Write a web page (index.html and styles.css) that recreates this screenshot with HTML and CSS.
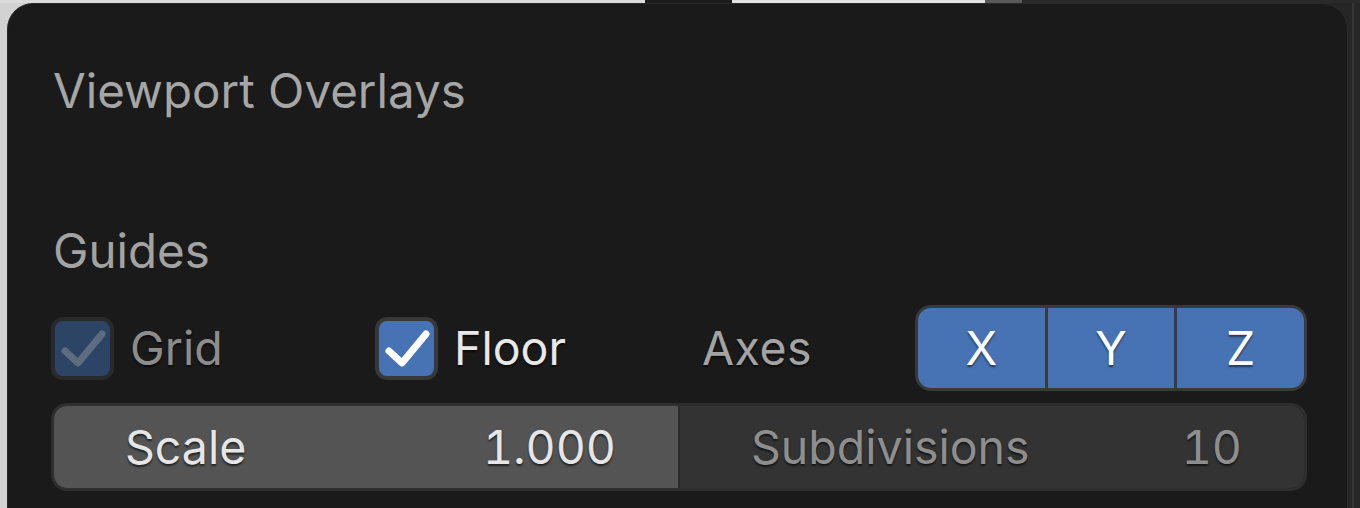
FILE: index.html
```html
<!DOCTYPE html>
<html lang="en">
<head>
  <meta charset="UTF-8" />
  <title>Viewport Overlays</title>
  <link rel="stylesheet" href="styles.css">
</head>
<body>
  <div class="scene">
    <div class="panel">
      <h1 class="panel-title">Viewport Overlays</h1>

      <h2 class="section-title">Guides</h2>

      <div class="row guides-row">
        <label class="check dim">
          <span class="box">
            <svg viewBox="0 0 63 63"><path d="M14 34 L27 46 L51 17" /></svg>
          </span>
          <span class="check-label">Grid</span>
        </label>

        <label class="check">
          <span class="box">
            <svg viewBox="0 0 63 63"><path d="M14 34 L27 46 L51 17" /></svg>
          </span>
          <span class="check-label">Floor</span>
        </label>

        <div class="axes">
          <span class="axes-label">Axes</span>
          <div class="toggle-group">
            <button class="toggle">X</button>
            <button class="toggle">Y</button>
            <button class="toggle">Z</button>
          </div>
        </div>
      </div>

      <div class="row fields">
        <div class="field field-scale">
          <span>Scale</span>
          <span class="num">1.000</span>
        </div>
        <div class="field field-subdiv">
          <span>Subdivisions</span>
          <span class="num">10</span>
        </div>
      </div>
    </div>
    <div class="edge"></div>
  </div>
</body>
</html>
```

FILE: styles.css
```css
body {
  margin: 0;
  background: #262626;
  font-family: Inter, 'Noto Sans', sans-serif;
  overflow: hidden;
}

.scene {
  display: flex;
  height: 508px;
  padding-top: 3px;
  box-sizing: border-box;
  background:
    linear-gradient(to right, #dcdcdc 0 645px, #1c1c1c 645px 732px, #e2e2e2 732px 985px, #595959 985px 1022px, #2a2a2a 1022px) top / 100% 3px no-repeat,
    linear-gradient(to right, #d2d2d2 0 60px, #262626 60px);
}

.panel {
  margin-left: 7px;
  width: 1341px;
  height: 560px;
  flex-shrink: 0;
  background: #1a1a1a;
  border: 1px solid #2a2a2a;
  border-radius: 26px;
  box-sizing: border-box;
  padding: 0 40px 0 43px;
}

.edge {
  margin-left: 4px;
  width: 2px;
  background: #363636;
}

.panel-title {
  margin: 57px 0 0 2px;
  font-size: 47.5px;
  font-weight: 400;
  color: #a6a6a6;
  line-height: 60px;
}

.section-title {
  margin: 100px 0 0 2px;
  font-size: 47.5px;
  font-weight: 400;
  color: #a3a3a3;
  line-height: 60px;
}

.row {
  display: flex;
  align-items: center;
}

.guides-row {
  margin-top: 24px;
  height: 86px;
  display: grid;
  grid-template-columns: 324px 327px 1fr;
  align-items: center;
}

.check {
  display: flex;
  align-items: center;
  gap: 16px;
}

.box {
  width: 63px;
  height: 63px;
  box-sizing: border-box;
  border: 4px solid #383838;
  border-radius: 12px;
  background: #4772b3;
  display: flex;
}

.box svg {
  margin: -4px;
  width: 63px;
  height: 63px;
}

.box path {
  fill: none;
  stroke: #ffffff;
  stroke-width: 7;
  stroke-linecap: round;
  stroke-linejoin: round;
}

.check-label {
  font-size: 46.5px;
  color: #e8e8e8;
  text-shadow: 0 2px 2px rgba(0, 0, 0, 0.6);
}

.check.dim .box {
  background: #2c4466;
  border-color: #2a2a2a;
}

.check.dim .box path {
  stroke: #5e6c80;
}

.check.dim .check-label {
  color: #8c8c8c;
}

.axes {
  display: flex;
  align-items: center;
  justify-content: space-between;
}

.axes-label {
  font-size: 46.5px;
  letter-spacing: 0.5px;
  color: #a3a3a3;
  text-shadow: 0 2px 2px rgba(0, 0, 0, 0.6);
}

.toggle-group {
  display: flex;
  width: 392px;
  height: 86px;
  box-sizing: border-box;
  border: 3px solid #3a3a3a;
  border-radius: 16px;
  overflow: hidden;
  background: #3a3a3a;
  gap: 3px;
}

.toggle {
  flex: 1;
  border: none;
  background: #4772b3;
  color: #ffffff;
  font-family: Inter, 'Noto Sans', sans-serif;
  font-size: 46.5px;
  padding: 0;
  text-shadow: 0 2px 2px rgba(0, 0, 0, 0.5);
}

.fields {
  margin-top: 12px;
  height: 88px;
  border: 3px solid #2e2e2e;
  border-radius: 16px;
  overflow: hidden;
  box-sizing: border-box;
}

.field {
  flex: 1;
  height: 100%;
  display: flex;
  align-items: center;
  justify-content: space-between;
  padding: 0 62px 0 71px;
  font-size: 46.5px;
  text-shadow: 0 2px 2px rgba(0, 0, 0, 0.6);
}

.num {
  font-variant-numeric: tabular-nums;
}

.field-scale {
  background: #545454;
  color: #e6e6e6;
}

.field-subdiv {
  background: #333333;
  color: #8e8e8e;
  border-left: 2px solid #2a2a2a;
}
```
